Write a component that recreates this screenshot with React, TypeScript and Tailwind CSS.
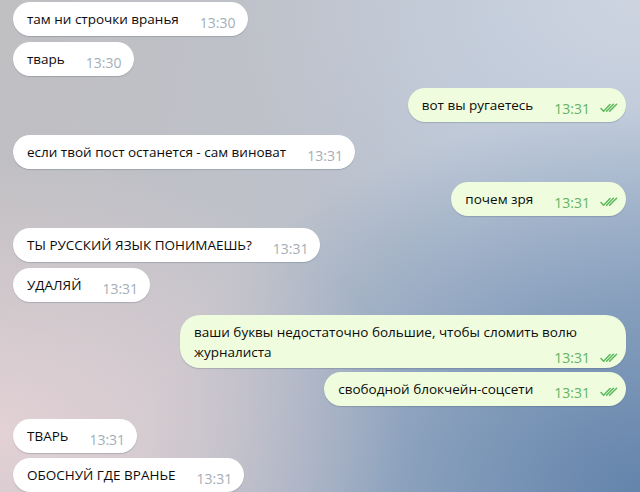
import React from 'react';

type Msg = {
  text: string;
  time: string;
  out?: boolean;
  gap: string;
  lines?: string[];
};

const messages: Msg[] = [
  { text: 'там ни строчки вранья', time: '13:30', gap: 'mt-[2px]' },
  { text: 'тварь', time: '13:30', gap: 'mt-[6px]' },
  { text: 'вот вы ругаетесь', time: '13:31', out: true, gap: 'mt-[12px]' },
  { text: 'если твой пост останется - сам виноват', time: '13:31', gap: 'mt-[13px]' },
  { text: 'почем зря', time: '13:31', out: true, gap: 'mt-[13px]' },
  { text: 'ТЫ РУССКИЙ ЯЗЫК ПОНИМАЕШЬ?', time: '13:31', gap: 'mt-[12px]' },
  { text: 'УДАЛЯЙ', time: '13:31', gap: 'mt-[6px]' },
  {
    text: 'ваши буквы недостаточно большие, чтобы сломить волю журналиста',
    lines: ['ваши буквы недостаточно большие, чтобы сломить волю', 'журналиста'],
    time: '13:31',
    out: true,
    gap: 'mt-[13px]',
  },
  { text: 'свободной блокчейн-соцсети', time: '13:31', out: true, gap: 'mt-[4px]' },
  { text: 'ТВАРЬ', time: '13:31', gap: 'mt-[13px]' },
  { text: 'ОБОСНУЙ ГДЕ ВРАНЬЕ', time: '13:31', gap: 'mt-[5px]' },
];

const DoubleCheck = () => (
  <svg width="18" height="10" viewBox="0 0 18 10" fill="none" className="shrink-0">
    <path d="M1 5.5 L3.6 8.2 L10 1.5" stroke="#5cb85c" strokeWidth="1.5" strokeLinecap="round" strokeLinejoin="round" />
    <path d="M6.6 8.2 L13.4 1.2" stroke="#5cb85c" strokeWidth="1.5" strokeLinecap="round" />
    <path d="M9.6 8.2 L16.6 1.2" stroke="#5cb85c" strokeWidth="1.5" strokeLinecap="round" />
  </svg>
);

const Bubble: React.FC<{ m: Msg }> = ({ m }) => {
  const bg = m.out ? 'bg-[#effdde]' : 'bg-white';
  const timeColor = m.out ? 'text-[#62b462]' : 'text-[#a3aeb8]';

  if (m.lines) {
    // two-line bubble: time sits beside the last line
    return (
      <div className={`flex justify-end ${m.gap}`}>
        <div className={`${bg} rounded-[20px] w-[446px] pl-[14px] pr-[8px] pt-[7px] shadow-[0_1px_1px_rgba(60,80,100,0.25)]`}>
          <div className="text-[13.5px] leading-[20px] text-[#0c0c0c] whitespace-nowrap">{m.lines[0]}</div>
          <div className="flex items-start justify-between">
            <span className="text-[13.5px] leading-[20px] text-[#0c0c0c]">{m.lines[1]}</span>
            <div className="flex items-center gap-[10px] mt-[6px]">
              <span className={`text-[14px] leading-[20px] ${timeColor}`}>{m.time}</span>
              <DoubleCheck />
            </div>
          </div>
        </div>
      </div>
    );
  }

  return (
    <div className={`flex ${m.out ? 'justify-end' : 'justify-start'} ${m.gap}`}>
      <div
        className={`${bg} rounded-full h-[34px] flex items-center pl-[14px] ${m.out ? 'pr-[8px]' : 'pr-[12px]'} shadow-[0_1px_1px_rgba(60,80,100,0.25)]`}
      >
        <span className="text-[13.5px] leading-[20px] text-[#0c0c0c] whitespace-nowrap">{m.text}</span>
        <span className={`ml-[21px] mt-[8px] text-[14px] leading-[20px] ${timeColor}`}>{m.time}</span>
        {m.out && (
          <span className="ml-[10px] mt-[6px] flex">
            <DoubleCheck />
          </span>
        )}
      </div>
    </div>
  );
};

export default function App() {
  return (
    <div
      className="w-[640px] h-[492px] overflow-hidden px-[13px] font-['Open_Sans','Noto_Sans',sans-serif] bg-[radial-gradient(ellipse_at_0%_88%,rgba(228,210,214,0.95)_0%,rgba(228,210,214,0)_45%),radial-gradient(ellipse_at_100%_100%,#6484ab_0%,rgba(100,132,171,0.6)_22%,rgba(100,132,171,0)_55%),radial-gradient(ellipse_at_100%_0%,#ced5e1_0%,rgba(206,213,225,0)_45%),linear-gradient(100deg,#c0bfc2_0%,#bec1c9_40%,#b5c1d2_70%,#a6b8cf_100%)]"
    >
      <div className="flex flex-col pr-[1px]">
        {messages.map((m, i) => (
          <Bubble key={i} m={m} />
        ))}
      </div>
    </div>
  );
}
